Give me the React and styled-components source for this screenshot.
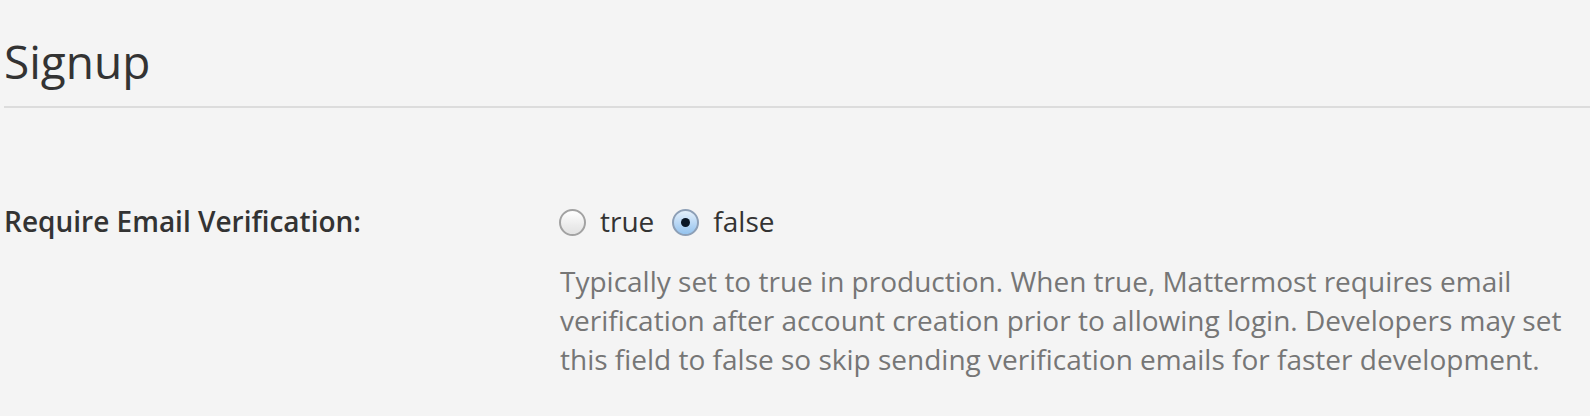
import React, { useState } from 'react';
import styled, { createGlobalStyle } from 'styled-components';

const GlobalStyle = createGlobalStyle`
  body {
    margin: 0;
    background: #f4f4f4;
    font-family: "Open Sans", "Liberation Sans", sans-serif;
    color: #333;
  }
`;

const Page = styled.div`
  padding: 0 0 0 4px;
`;

const Heading = styled.h3`
  margin: 0;
  padding: 36px 0 20px;
  font-size: 46px;
  line-height: 50px;
  font-weight: 400;
  color: #333;
  border-bottom: 2px solid #dcdcdc;
`;

const FormRow = styled.div`
  display: grid;
  grid-template-columns: 555px 1fr;
  margin-top: 93px;
`;

const Label = styled.label`
  font-size: 28px;
  line-height: 40px;
  font-weight: 600;
  color: #333;
`;

const Controls = styled.div`
  display: flex;
  flex-direction: column;
`;

const RadioGroup = styled.div`
  display: flex;
  align-items: center;
  height: 40px;
`;

const RadioLabel = styled.label`
  display: flex;
  align-items: center;
  font-size: 28px;
  line-height: 40px;
  color: #333;
  cursor: pointer;
  & + & {
    margin-left: 18px;
  }
`;

const Radio = styled.input.attrs({ type: 'radio' })`
  appearance: none;
  -webkit-appearance: none;
  box-sizing: border-box;
  width: 27px;
  height: 27px;
  margin: 0 14px 0 0;
  border-radius: 50%;
  border: 2px solid #a2a2a2;
  background: linear-gradient(#ffffff, #ececec 60%, #e2e2e2);
  position: relative;
  top: 1px;

  &:checked {
    border-color: #8d9fb6;
    background: linear-gradient(#e4f0fb 0%, #bcd9f5 50%, #94c3ee 100%);
  }
  &:checked::after {
    content: '';
    position: absolute;
    left: 50%;
    top: 50%;
    width: 9px;
    height: 9px;
    margin: -4.5px 0 0 -4.5px;
    border-radius: 50%;
    background: #0b1726;
  }
`;

const Help = styled.p`
  margin: 21px 0 0 1px;
  max-width: 1020px;
  font-size: 28px;
  line-height: 39px;
  color: #767676;
`;

export default function App() {
  const [value, setValue] = useState('false');
  return (
    <Page>
      <GlobalStyle />
      <Heading>Signup</Heading>
      <FormRow>
        <Label>Require Email Verification:</Label>
        <Controls>
          <RadioGroup>
            <RadioLabel>
              <Radio
                name="verify"
                checked={value === 'true'}
                onChange={() => setValue('true')}
              />
              true
            </RadioLabel>
            <RadioLabel>
              <Radio
                name="verify"
                checked={value === 'false'}
                onChange={() => setValue('false')}
              />
              false
            </RadioLabel>
          </RadioGroup>
          <Help>
            Typically set to true in production. When true, Mattermost requires email
            verification after account creation prior to allowing login. Developers may set
            this field to false so skip sending verification emails for faster development.
          </Help>
        </Controls>
      </FormRow>
    </Page>
  );
}
